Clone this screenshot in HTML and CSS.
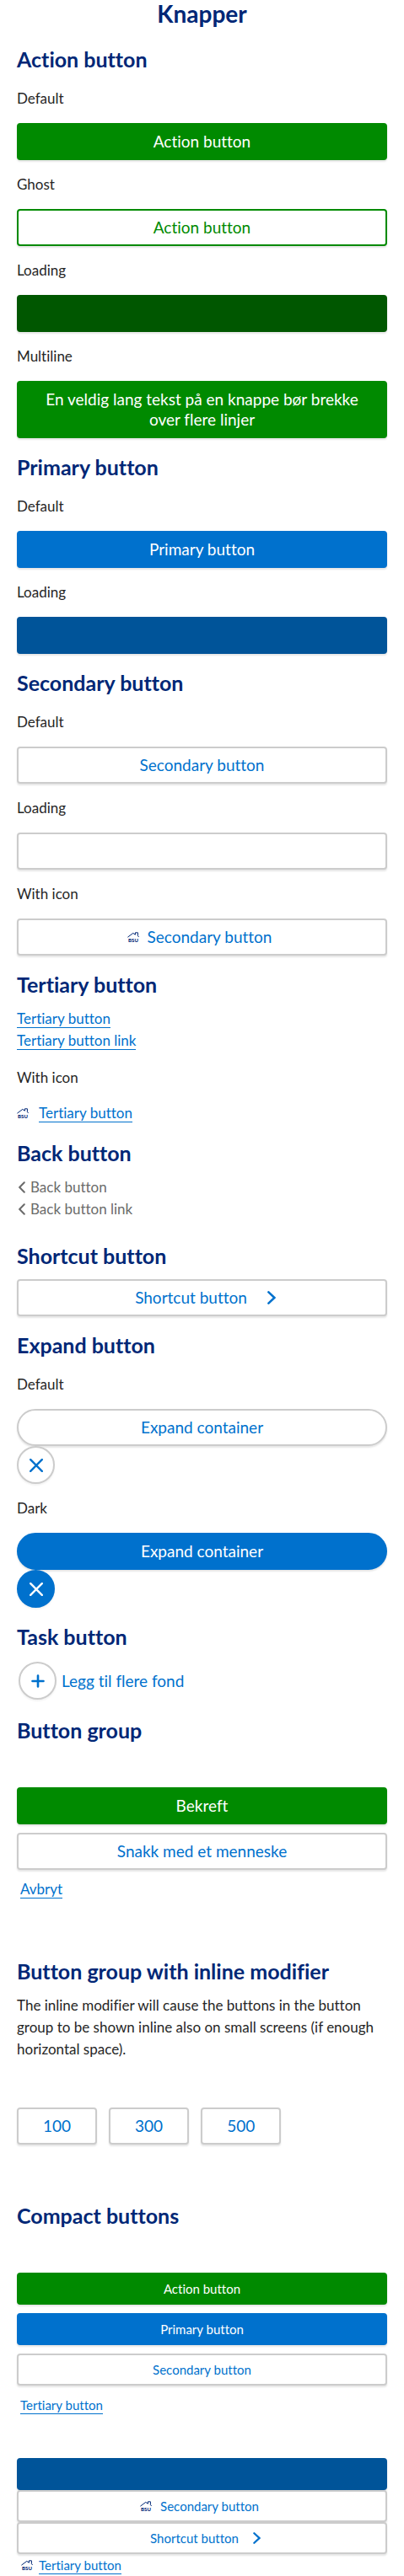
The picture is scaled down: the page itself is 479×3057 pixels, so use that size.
FILE: index.html
```html
<!DOCTYPE html>
<html lang="nb">
<head>
<meta charset="utf-8">
<meta name="viewport" content="width=device-width, initial-scale=1">
<title>Knapper</title>
<link rel="stylesheet" href="styles.css">
</head>
<body>
<svg class="sprite" aria-hidden="true">
  <symbol id="chevron" viewBox="0 0 10 16">
    <path d="m1.4 1.4 7 6.6-7 6.6" fill="none" stroke="currentColor" stroke-width="2.6" stroke-linecap="round"/>
  </symbol>
  <symbol id="chevron-back" viewBox="0 0 8 14">
    <path d="M6.8 1.2 1.2 7l5.6 5.8" fill="none" stroke="currentColor" stroke-width="2" stroke-linecap="round"/>
  </symbol>
  <symbol id="cross" viewBox="0 0 16 16">
    <path d="m1.2 1.2 13.6 13.6m0-13.6L1.2 14.8" fill="none" stroke="currentColor" stroke-width="2.4" stroke-linecap="round"/>
  </symbol>
  <symbol id="plus" viewBox="0 0 16 16">
    <path d="M8 1.5v13M1.5 8h13" fill="none" stroke="currentColor" stroke-width="2.6" stroke-linecap="round"/>
  </symbol>
</svg>
<main class="page">
  <h1 class="title">Knapper</h1>

  <h2 class="heading">Action button</h2>
  <p class="text">Default</p>
  <button class="button button--action">Action button</button>
  <p class="text">Ghost</p>
  <button class="button button--ghost">Action button</button>
  <p class="text">Loading</p>
  <button class="button button--action button--loading" aria-label="Loading"></button>
  <p class="text">Multiline</p>
  <button class="button button--action">En veldig lang tekst på en knappe bør brekke over flere linjer</button>

  <h2 class="heading">Primary button</h2>
  <p class="text">Default</p>
  <button class="button button--primary">Primary button</button>
  <p class="text">Loading</p>
  <button class="button button--primary button--loading" aria-label="Loading"></button>

  <h2 class="heading">Secondary button</h2>
  <p class="text">Default</p>
  <button class="button">Secondary button</button>
  <p class="text">Loading</p>
  <button class="button" aria-label="Loading"></button>
  <p class="text">With icon</p>
  <button class="button button--icon"><svg class="house" viewBox="0 0 14 12"><path d="M.4 6.2 6.8 1.4l2.6 1.8V.8h3v3.8l1.3 1.4" fill="none" stroke="currentColor"/><text class="house-text" x="7" y="12" text-anchor="middle">BSU</text></svg>Secondary button</button>

  <h2 class="heading">Tertiary button</h2>
  <div class="links links--tertiary">
    <button class="tertiary"><span class="underlined">Tertiary button</span></button>
    <a class="tertiary" href="#"><span class="underlined">Tertiary button link</span></a>
  </div>
  <p class="text">With icon</p>
  <button class="tertiary"><svg class="house" viewBox="0 0 14 12"><path d="M.4 6.2 6.8 1.4l2.6 1.8V.8h3v3.8l1.3 1.4" fill="none" stroke="currentColor"/><text class="house-text" x="7" y="12" text-anchor="middle">BSU</text></svg><span class="underlined">Tertiary button</span></button>

  <h2 class="heading">Back button</h2>
  <div class="links links--back">
    <button class="back"><svg class="back-icon"><use href="#chevron-back"/></svg>Back button</button>
    <a class="back" href="#"><svg class="back-icon"><use href="#chevron-back"/></svg>Back button link</a>
  </div>

  <h2 class="heading">Shortcut button</h2>
  <button class="button button--shortcut">Shortcut button<svg class="chevron"><use href="#chevron"/></svg></button>

  <h2 class="heading">Expand button</h2>
  <p class="text">Default</p>
  <button class="button button--expand">Expand container</button>
  <button class="circle" aria-label="Close"><svg class="cross"><use href="#cross"/></svg></button>
  <p class="text">Dark</p>
  <button class="button button--expand button--dark">Expand container</button>
  <button class="circle circle--dark" aria-label="Close"><svg class="cross"><use href="#cross"/></svg></button>

  <h2 class="heading">Task button</h2>
  <button class="task"><span class="circle"><svg class="cross"><use href="#plus"/></svg></span>Legg til flere fond</button>

  <h2 class="heading">Button group</h2>
  <div class="group">
    <button class="button button--action">Bekreft</button>
    <button class="button">Snakk med et menneske</button>
    <button class="tertiary"><span class="underlined">Avbryt</span></button>
  </div>

  <h2 class="heading">Button group with inline modifier</h2>
  <p class="text text--intro">The inline modifier will cause the buttons in the button group to be shown inline also on small screens (if enough horizontal space).</p>
  <div class="group group--inline">
    <button class="button">100</button>
    <button class="button">300</button>
    <button class="button">500</button>
  </div>

  <h2 class="heading">Compact buttons</h2>
  <div class="group compact">
    <button class="button button--action">Action button</button>
    <button class="button button--primary">Primary button</button>
    <button class="button">Secondary button</button>
    <button class="tertiary"><span class="underlined">Tertiary button</span></button>
  </div>
  <div class="compact">
    <button class="button button--primary button--loading" aria-label="Loading"></button>
    <button class="button button--icon"><svg class="house" viewBox="0 0 14 12"><path d="M.4 6.2 6.8 1.4l2.6 1.8V.8h3v3.8l1.3 1.4" fill="none" stroke="currentColor"/><text class="house-text" x="7" y="12" text-anchor="middle">BSU</text></svg>Secondary button</button>
    <button class="button button--shortcut">Shortcut button<svg class="chevron"><use href="#chevron"/></svg></button>
    <button class="tertiary tertiary--inset"><svg class="house" viewBox="0 0 14 12"><path d="M.4 6.2 6.8 1.4l2.6 1.8V.8h3v3.8l1.3 1.4" fill="none" stroke="currentColor"/><text class="house-text" x="7" y="12" text-anchor="middle">BSU</text></svg><span class="underlined">Tertiary button</span></button>
  </div>
</main>
</body>
</html>
```
FILE: styles.css
```css
* {
  box-sizing: border-box;
}

body {
  margin: 0;
  background: #fff;
  color: #262626;
  font: 17px/26px Lato, sans-serif;
  font-variant-ligatures: none;
}

button {
  margin: 0;
  font-family: inherit;
  font-variant-ligatures: none;
  cursor: pointer;
}

svg {
  flex: none;
}

.sprite {
  position: absolute;
  width: 0;
  height: 0;
}

.page {
  padding: 0 20px;
}

.title {
  margin: 0 0 20px;
  color: #002776;
  font-size: 28px;
  line-height: 32px;
  text-align: center;
}

.heading {
  margin: 16px 0 10px;
  color: #002776;
  font-size: 25px;
  line-height: 36px;
}

.text {
  margin: 16px 0;
}

.text--intro {
  margin: 10px 0 0;
}

.button {
  display: flex;
  align-items: center;
  justify-content: center;
  width: 100%;
  min-height: 44px;
  padding: 8px 28px;
  border: 2px solid #ccc;
  border-radius: 4px;
  background: #fff;
  box-shadow: 0 2px 2px rgba(0, 0, 0, 0.1);
  color: #0071cd;
  font-size: 19px;
  line-height: 24px;
  text-align: center;
}

.button--action {
  border-color: #008a00;
  background: #008a00;
  color: #fff;
}

.button--ghost {
  border-color: #008a00;
  color: #008a00;
}

.button--primary,
.button--dark {
  border-color: #0071cd;
  background: #0071cd;
  color: #fff;
}

.button--action.button--loading {
  border-color: #005700;
  background: #005700;
}

.button--primary.button--loading {
  border-color: #005499;
  background: #005499;
}

.button--icon {
  gap: 10px;
  padding-right: 34px;
}

.button--shortcut {
  gap: 24px;
  padding-left: 36px;
}

.button--expand {
  border-radius: 22px;
}

.house {
  width: 14px;
  height: 12px;
  color: #002776;
}

.house-text {
  fill: currentColor;
  font: 900 6px Lato, sans-serif;
}

.chevron {
  width: 10px;
  height: 16px;
}

.cross {
  width: 16px;
  height: 16px;
}

.circle {
  display: flex;
  align-items: center;
  justify-content: center;
  width: 45px;
  height: 45px;
  padding: 0;
  border: 2px solid #ccc;
  border-radius: 50%;
  background: #fff;
  box-shadow: 0 2px 2px rgba(0, 0, 0, 0.05);
  color: #0071cd;
}

.circle--dark {
  border-color: #0071cd;
  background: #0071cd;
  color: #fff;
}

.links {
  display: flex;
  flex-direction: column;
  align-items: flex-start;
}

.links--tertiary {
  padding-bottom: 2px;
}

.links--back {
  padding-bottom: 8px;
}

.tertiary,
.back {
  display: flex;
  align-items: center;
  padding: 0;
  border: 0;
  background: none;
  font-size: 17px;
  line-height: 26px;
  text-decoration: none;
}

.tertiary {
  gap: 12px;
  color: #0071cd;
}

.tertiary--inset {
  gap: 7px;
  padding-left: 5px;
}

.underlined {
  height: 24px;
  margin-bottom: 2px;
  border-bottom: 1px solid;
}

.back {
  gap: 6px;
  padding-left: 2px;
  color: #6b6b6b;
}

.back-icon {
  width: 8px;
  height: 14px;
}

.task {
  display: flex;
  align-items: center;
  gap: 6px;
  padding: 2px;
  border: 0;
  background: none;
  color: #0071cd;
  font-size: 19px;
  line-height: 24px;
}

.group {
  display: flex;
  flex-direction: column;
  gap: 10px;
  padding: 40px 0 50px;
}

.group .tertiary {
  padding-left: 4px;
}

.group--inline {
  flex-flow: row wrap;
  gap: 14px;
  padding: 56px 0 50px;
}

.group--inline .button {
  width: auto;
  padding: 8px 29px;
}

.compact .button {
  min-height: 38px;
  padding-top: 5px;
  padding-bottom: 5px;
  font-size: 15px;
}

.compact .button--shortcut {
  gap: 17px;
}

.compact .chevron {
  width: 9px;
  height: 14px;
}

.compact .tertiary {
  font-size: 15px;
}
```
